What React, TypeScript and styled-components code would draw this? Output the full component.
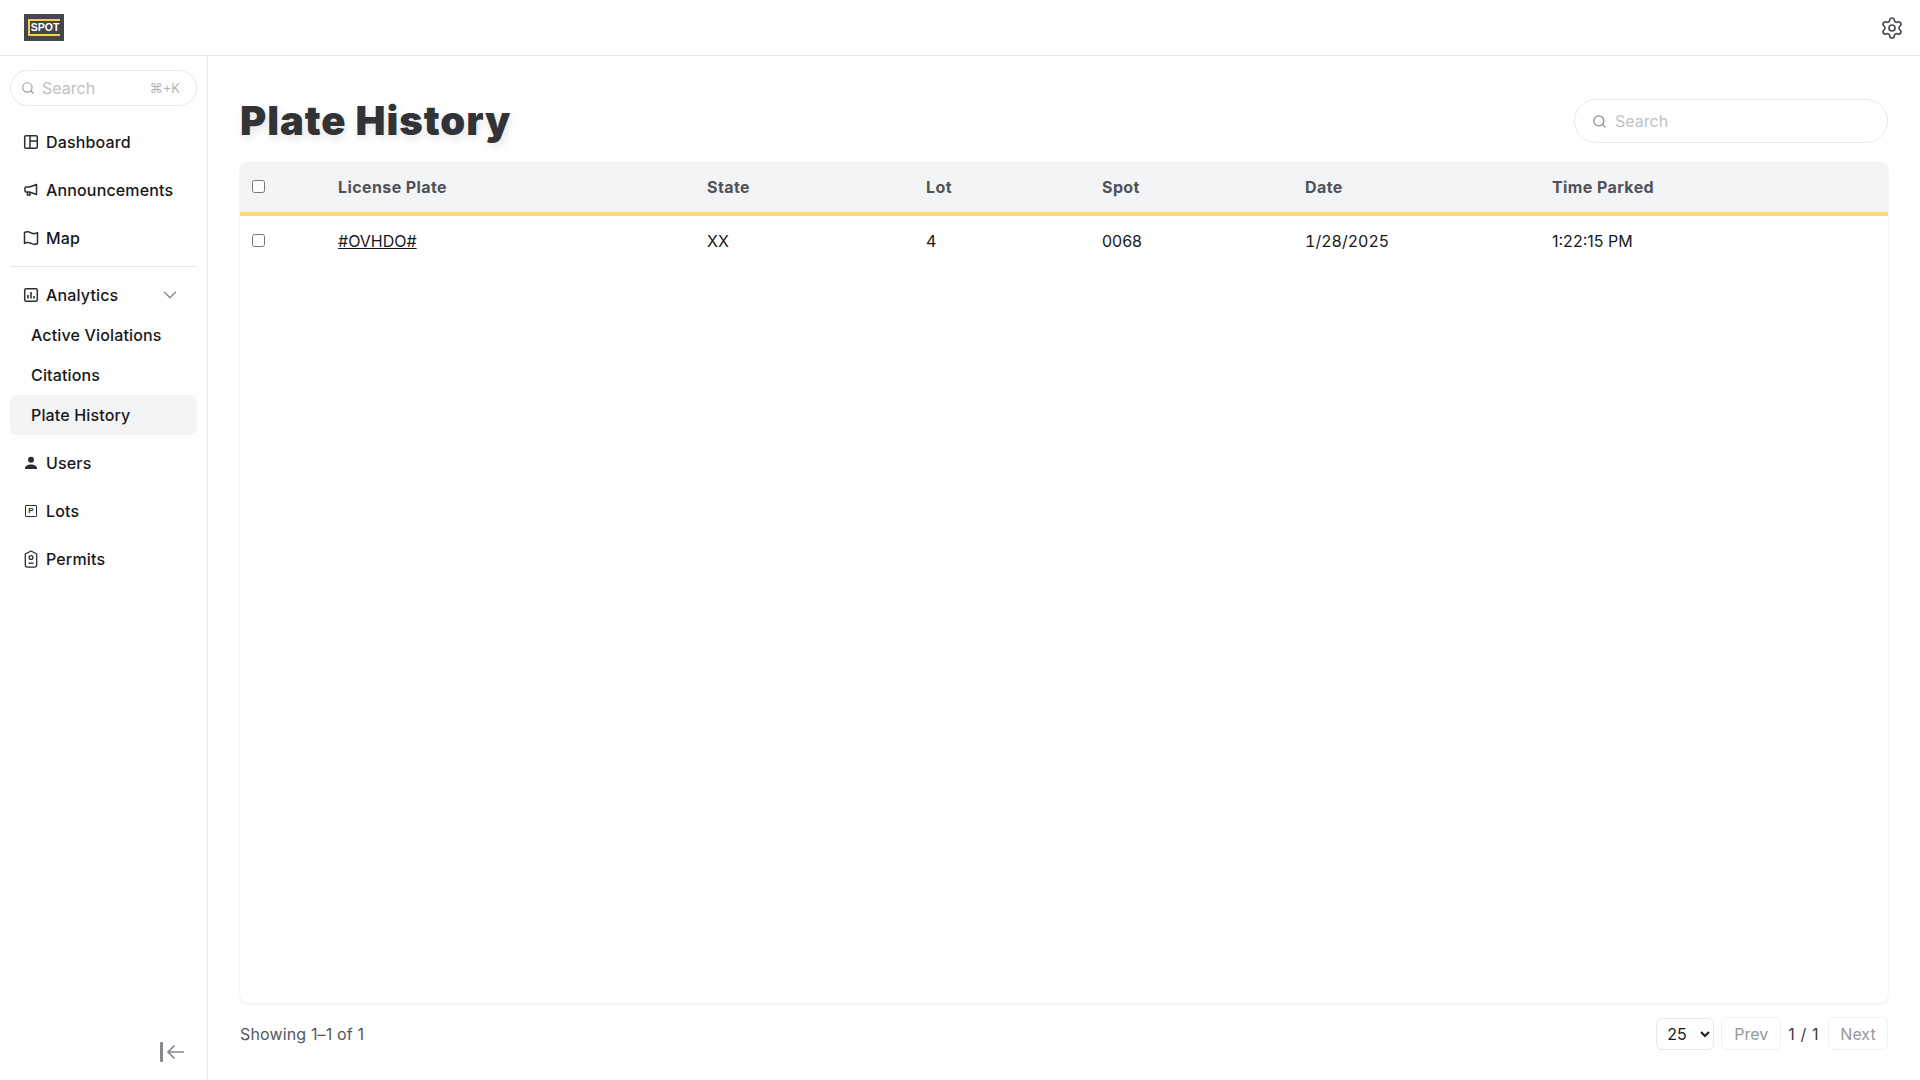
import React from "react";
import styled, { createGlobalStyle } from "styled-components";
import { ChevronDown, Search, Settings } from "lucide-react";

const GlobalStyle = createGlobalStyle`
  html, body {
    margin: 0;
    height: 100%;
    background: #fff;
    font-family: Inter, "Liberation Sans", sans-serif;
    color: #18181b;
  }
  * { box-sizing: border-box; }
`;

const Page = styled.div`
  width: 1920px;
  height: 1080px;
  display: flex;
  flex-direction: column;
  overflow: hidden;
`;

const TopBar = styled.header`
  height: 56px;
  flex: none;
  display: flex;
  align-items: center;
  justify-content: space-between;
  padding: 0 16px 0 24px;
  border-bottom: 1px solid #e8e8ea;
`;

const Logo = styled.div`
  width: 40px;
  height: 27px;
  background: #45464a;
  display: flex;
  align-items: center;
  justify-content: center;
`;

const LogoFrame = styled.div`
  width: 32px;
  height: 17px;
  border: 2px solid #f2cf4f;
  border-right: 0;
  display: flex;
  align-items: center;
  justify-content: center;
  color: #fff;
  font: 700 10.5px/1 "Liberation Sans", sans-serif;
`;

const IconButton = styled.button`
  border: 0;
  background: none;
  padding: 0;
  display: flex;
  color: #4b4d52;
`;

const Body = styled.div`
  flex: 1;
  min-height: 0;
  display: flex;
`;

const Sidebar = styled.aside`
  width: 208px;
  flex: none;
  display: flex;
  flex-direction: column;
  padding: 14px 10px 0;
  border-right: 1px solid #e8e8ea;
  background: #fefefe;
`;

const SideSearch = styled.div`
  height: 36px;
  flex: none;
  display: flex;
  align-items: center;
  gap: 7px;
  padding: 0 16px 0 10px;
  margin-bottom: 12px;
  border: 1px solid #e8e8ea;
  border-radius: 18px;
  font-size: 16px;
  color: #c0c1c5;
`;

const Shortcut = styled.span`
  margin-left: auto;
  font-size: 13px;
  color: #b4b5b9;
`;

const NavItem = styled.a<{ $parent?: boolean }>`
  height: 40px;
  flex: none;
  display: flex;
  align-items: center;
  gap: 7px;
  margin: ${(p) => (p.$parent ? "4px 0 0" : "4px 0")};
  padding: 0 14px 0 13px;
  font-size: 16px;
  font-weight: 500;
  letter-spacing: 0.15px;
  color: #18181b;
`;

const NavIcon = styled.span`
  width: 16px;
  height: 16px;
  flex: none;
  display: flex;
  align-items: center;
  justify-content: center;
  color: #2c2e33;
`;

const Caret = styled(ChevronDown)`
  margin-left: auto;
  margin-right: 2px;
  color: #85878c;
`;

const Divider = styled.hr`
  width: 100%;
  margin: 4px 0;
  border: 0;
  border-top: 1px solid #e8e8ea;
`;

const SubList = styled.div`
  display: flex;
  flex-direction: column;
  margin-bottom: 4px;
`;

const SubItem = styled.a<{ $active?: boolean }>`
  height: 40px;
  flex: none;
  display: flex;
  align-items: center;
  padding: 0 21px;
  border-radius: 8px;
  font-size: 16px;
  font-weight: 500;
  letter-spacing: 0.15px;
  color: #18181b;
  background: ${(p) => (p.$active ? "#f3f4f6" : "transparent")};
`;

const Collapse = styled.button`
  margin-top: auto;
  align-self: flex-end;
  margin-bottom: 18px;
  margin-right: 13px;
  border: 0;
  background: none;
  padding: 0;
  display: flex;
  color: #85878c;
`;

const Main = styled.main`
  flex: 1;
  min-width: 0;
  display: flex;
  flex-direction: column;
  padding: 24px 32px 0 32px;
`;

const TitleRow = styled.div`
  height: 82px;
  flex: none;
  display: flex;
  align-items: center;
  justify-content: space-between;
`;

const Title = styled.h1`
  margin: 0;
  font-size: 40px;
  line-height: 48px;
  font-weight: 900;
  letter-spacing: 0.95px;
  color: #323336;
  text-shadow: 2px 4px 8px rgba(0, 0, 0, 0.1);
`;

const MainSearch = styled.div`
  width: 314px;
  height: 44px;
  display: flex;
  align-items: center;
  gap: 8px;
  padding: 0 17px;
  border: 1px solid #e8e8ea;
  border-radius: 22px;
  font-size: 16px;
  color: #c0c1c5;
`;

const Card = styled.section`
  height: 841px;
  flex: none;
  border-radius: 8px;
  box-shadow: 0 1px 3px rgba(0, 0, 0, 0.1);
  overflow: hidden;
`;

const columns = "86px 369px 219px 176px 203px 247px 1fr";

const HeadRow = styled.div`
  height: 54px;
  display: grid;
  grid-template-columns: ${columns};
  align-items: center;
  padding: 0 0 0 12px;
  background: #f3f4f6;
  border-bottom: 4px solid #fcdc6f;
  font-size: 16px;
  font-weight: 700;
  letter-spacing: 0.4px;
  color: #505258;
`;

const DataRow = styled.div`
  height: 50px;
  display: grid;
  grid-template-columns: ${columns};
  align-items: center;
  padding: 0 0 0 12px;
  font-size: 16px;
  color: #18181b;
`;

const Check = styled.input.attrs({ type: "checkbox" })`
  width: 13px;
  height: 13px;
  margin: -2px 0 0;
`;

const PlateLink = styled.a`
  color: #18181b;
  text-decoration: underline;
  justify-self: start;
`;

const DateCell = styled.span`
  font-variant-numeric: tabular-nums;
`;

const Footer = styled.footer`
  flex: 1;
  display: flex;
  align-items: center;
  justify-content: space-between;
  padding-bottom: 16px;
  font-size: 16px;
  letter-spacing: 0.15px;
  color: #55575c;
`;

const Pager = styled.div`
  display: flex;
  align-items: center;
  gap: 7px;
`;

const PageSelect = styled.select`
  width: 58px;
  height: 32px;
  padding: 0 0 0 6px;
  border: 1px solid #e8e8ea;
  border-radius: 6px;
  background: #fff;
  font: 400 16px Inter, sans-serif;
  color: #18181b;
`;

const PageButton = styled.button`
  width: 60px;
  height: 33px;
  border: 1px solid #f0f0f2;
  border-radius: 6px;
  background: #fff;
  font: 400 16px Inter, sans-serif;
  color: #96979c;
`;

const PageCount = styled.span`
  padding-right: 2px;
  letter-spacing: 0.6px;
  color: #3a3c41;
`;

const LotGlyph = styled.span`
  width: 12px;
  height: 12px;
  border: 1.5px solid #2c2e33;
  border-radius: 1px;
  display: flex;
  align-items: center;
  justify-content: center;
  font: 700 8px/1 "Liberation Sans", sans-serif;
  color: #2c2e33;
`;

const strokeProps = {
  width: 16,
  height: 16,
  viewBox: "0 0 16 16",
  fill: "none",
  stroke: "currentColor",
  strokeWidth: 1.5,
} as const;

function DashboardIcon() {
  return (
    <svg {...strokeProps}>
      <rect x="1.7" y="1.7" width="12.6" height="12.6" rx="1.4" />
      <path d="M7 1.7v12.6M7 7h7.3" />
    </svg>
  );
}

function MegaphoneIcon() {
  return (
    <svg {...strokeProps}>
      <path d="M13.500 2.500v10L6.500 10H3a1 1 0 0 1-1-1V6a1 1 0 0 1 1-1h3.500l7-2.500Z" strokeLinejoin="round" />
      <path d="M4.500 10v3h2.500v-2.700" />
    </svg>
  );
}

function MapIcon() {
  return (
    <svg {...strokeProps}>
      <path
        d="M1.500 2.500c2.200-1.200 4-1 6.500.300 2.500 1.300 4.300 1.200 6.500-.300v11c-2.200 1.300-4 1.200-6.500-.100-2.500-1.300-4.300-1.300-6.500 0v-10.900Z"
        strokeLinejoin="round"
      />
    </svg>
  );
}

function AnalyticsIcon() {
  return (
    <svg {...strokeProps}>
      <rect x="1.700" y="1.700" width="12.600" height="12.600" rx="1.600" />
      <path d="M5 11.500V8M8 11.500V5M11 11.500V9" strokeWidth="1.600" />
    </svg>
  );
}

function UserIcon() {
  return (
    <svg width="16" height="16" viewBox="0 0 16 16" fill="currentColor">
      <circle cx="8" cy="4.800" r="3" />
      <path d="M2 13.500c0-2.600 3-3.900 6-3.900s6 1.300 6 3.900v.5H2v-.5Z" />
    </svg>
  );
}

function PermitIcon() {
  return (
    <svg width="14" height="18" viewBox="0 0 14 18" fill="none" stroke="currentColor" strokeWidth="1.300">
      <path d="M7 1 12.700 4v11.300a1.800 1.800 0 0 1-1.800 1.800H3.100a1.800 1.800 0 0 1-1.800-1.800V4L7 1Z" strokeLinejoin="round" />
      <circle cx="7" cy="7.500" r="1.900" />
      <path d="M4.500 13.200h5" />
    </svg>
  );
}

function CollapseIcon() {
  return (
    <svg width="24" height="20" viewBox="0 0 24 20" fill="none" stroke="currentColor" strokeWidth="1.700">
      <rect x="0" y="0" width="3" height="20" rx="1" fill="currentColor" stroke="none" />
      <path d="M24 10H8M14.500 3.500 8 10l6.500 6.500" />
    </svg>
  );
}

const topItems = [
  { label: "Dashboard", icon: <DashboardIcon /> },
  { label: "Announcements", icon: <MegaphoneIcon /> },
  { label: "Map", icon: <MapIcon /> },
];

const subItems = ["Active Violations", "Citations", "Plate History"];

const headings = ["License Plate", "State", "Lot", "Spot", "Date", "Time Parked"];

export default function App() {
  return (
    <Page>
      <GlobalStyle />
      <TopBar>
        <Logo>
          <LogoFrame>SPOT</LogoFrame>
        </Logo>
        <IconButton aria-label="Settings">
          <Settings size={24} strokeWidth={1.7} />
        </IconButton>
      </TopBar>
      <Body>
        <Sidebar>
          <SideSearch>
            <Search size={14} color="#9b9ca1" />
            Search
            <Shortcut>⌘+K</Shortcut>
          </SideSearch>
          {topItems.map((item) => (
            <NavItem key={item.label}>
              <NavIcon>{item.icon}</NavIcon>
              {item.label}
            </NavItem>
          ))}
          <Divider />
          <NavItem $parent>
            <NavIcon>
              <AnalyticsIcon />
            </NavIcon>
            Analytics
            <Caret size={22} strokeWidth={1.5} />
          </NavItem>
          <SubList>
            {subItems.map((label) => (
              <SubItem key={label} $active={label === "Plate History"}>
                {label}
              </SubItem>
            ))}
          </SubList>
          <NavItem>
            <NavIcon>
              <UserIcon />
            </NavIcon>
            Users
          </NavItem>
          <NavItem>
            <NavIcon>
              <LotGlyph>P</LotGlyph>
            </NavIcon>
            Lots
          </NavItem>
          <NavItem>
            <NavIcon>
              <PermitIcon />
            </NavIcon>
            Permits
          </NavItem>
          <Collapse aria-label="Collapse sidebar">
            <CollapseIcon />
          </Collapse>
        </Sidebar>
        <Main>
          <TitleRow>
            <Title>Plate History</Title>
            <MainSearch>
              <Search size={15} color="#85878c" />
              Search
            </MainSearch>
          </TitleRow>
          <Card>
            <HeadRow>
              <Check />
              {headings.map((h) => (
                <span key={h}>{h}</span>
              ))}
            </HeadRow>
            <DataRow>
              <Check />
              <PlateLink>#OVHDO#</PlateLink>
              <span>XX</span>
              <span>4</span>
              <span>0068</span>
              <DateCell>1/28/2025</DateCell>
              <span>1:22:15 PM</span>
            </DataRow>
          </Card>
          <Footer>
            <span>Showing 1–1 of 1</span>
            <Pager>
              <PageSelect defaultValue="25">
                <option>25</option>
                <option>50</option>
                <option>100</option>
              </PageSelect>
              <PageButton disabled>Prev</PageButton>
              <PageCount>1 / 1</PageCount>
              <PageButton disabled>Next</PageButton>
            </Pager>
          </Footer>
        </Main>
      </Body>
    </Page>
  );
}
